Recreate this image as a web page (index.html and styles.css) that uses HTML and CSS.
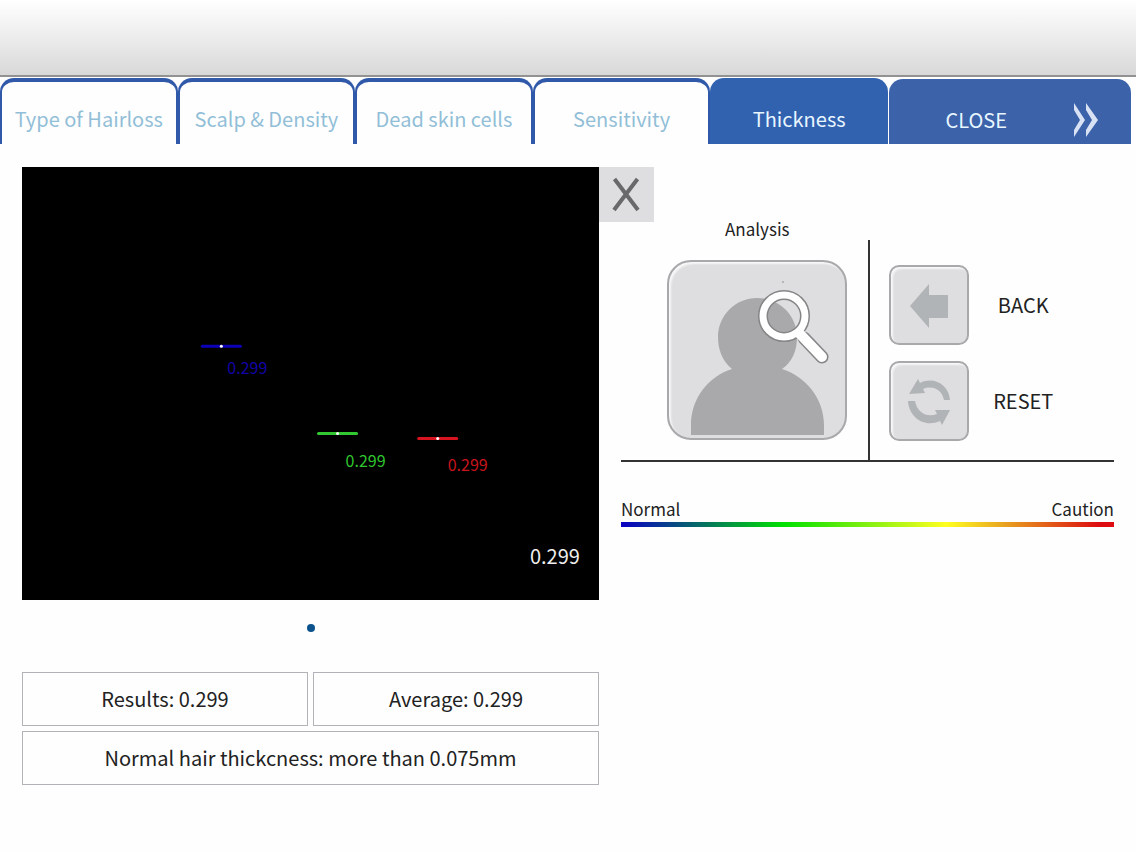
FILE: index.html
```html
<!DOCTYPE html>
<html lang="en">
<head>
  <meta charset="UTF-8" />
  <meta name="viewport" content="width=device-width, initial-scale=1.0"/>
  <title>Thickness</title>
  <link rel="stylesheet" href="styles.css">
</head>
<body>

<header class="topbar"></header>

<nav class="tabs">
  <button type="button" class="tab">Type of Hairloss</button>
  <button type="button" class="tab">Scalp &amp; Density</button>
  <button type="button" class="tab">Dead skin cells</button>
  <button type="button" class="tab">Sensitivity</button>
  <button type="button" class="tab active">Thickness</button>
  <button type="button" class="tab close">
    <span>CLOSE</span>
    <svg class="chevrons" viewBox="0 0 26 36" width="26" height="36">
      <path d="M1 1 L12 18 L1 35 V28 L7 18 L1 8 Z M13 1 L25 18 L13 35 V28 L19 18 L13 8 Z"/>
    </svg>
  </button>
</nav>

<main class="content">
  <section class="left">
    <div class="viewer">
      <svg class="scan" viewBox="0 0 576 432">
        <g class="blue">
          <path d="M180 179 H218"/>
          <circle cx="199" cy="179" r="1.5"/>
          <text x="205" y="207">0.299</text>
        </g>
        <g class="green">
          <path d="M296 266 H334"/>
          <circle cx="315" cy="266" r="1.5"/>
          <text x="323" y="299">0.299</text>
        </g>
        <g class="red">
          <path d="M396 271 H434"/>
          <circle cx="415" cy="271" r="1.5"/>
          <text x="425" y="303">0.299</text>
        </g>
        <text class="value" x="507" y="396">0.299</text>
      </svg>
      <button type="button" class="dismiss" aria-label="Close image">
        <svg viewBox="0 0 55 55"><path d="M15.500 12 L39 43 M38.500 12 L15 43"/></svg>
      </button>
    </div>
    <div class="pager"><span class="dot"></span></div>
    <div class="results">
      <div class="box">Results: 0.299</div>
      <div class="box">Average: 0.299</div>
      <div class="box wide">Normal hair thickcness: more than 0.075mm</div>
    </div>
  </section>

  <section class="right">
    <div class="tools">
      <div class="analysis">
        <label for="analysis">Analysis</label>
        <button type="button" id="analysis" class="tile large">
          <svg viewBox="0 0 180 180">
            <g class="person">
              <path d="M24 175 V165 C24 138 42 116 65 109 C55 101 51 89 51 77 C51 55 69 38 90 38 C112 38 130 55 130 77 C130 91 125 102 115 109 C138 116 157 138 157 165 V175 Z"/>
            </g>
            <circle cx="116" cy="22" r="1"/>
            <path class="outline" d="M137 78 L155 97"/>
            <circle class="outline ring" cx="117" cy="56" r="21"/>
            <path class="glass" d="M133 74 L155 97"/>
            <circle class="glass ring" cx="117" cy="56" r="21"/>
          </svg>
        </button>
      </div>
      <div class="actions">
        <button type="button" class="action">
          <span class="tile">
            <svg viewBox="0 0 80 80"><path d="M21 41 L40 19 V30 H59 V53 H40 V63 Z"/></svg>
          </span>
          <span>BACK</span>
        </button>
        <button type="button" class="action">
          <span class="tile">
            <svg viewBox="0 0 80 80">
              <path d="M20 33 L29 18 L31 22 C45 15 60 24 61 39 H55 C53 29 44 24 34 28 L36 32 Z"/>
              <path d="M61 49 L53 64 L51 60 C36 67 20 57 19 40 H26 C28 51 37 57 48 53 L46 49 Z"/>
            </svg>
          </span>
          <span>RESET</span>
        </button>
      </div>
    </div>
    <div class="scale">
      <div class="scale-labels"><span>Normal</span><span>Caution</span></div>
      <div class="scale-bar"></div>
    </div>
  </section>
</main>

</body>
</html>
```
FILE: styles.css
```css
* {
  box-sizing: border-box;
}
body {
  margin: 0;
  font-family: "Noto Sans CJK SC", sans-serif;
  font-size: 20px;
  line-height: 24px;
  background: #fefefe;
  color: #222;
}
button {
  padding: 0;
  border: none;
  background: none;
  font: inherit;
  color: inherit;
  cursor: pointer;
}
svg {
  display: block;
}

.topbar {
  height: 77px;
  margin-bottom: 1px;
  background: linear-gradient(#ffffff, #f2f2f2 35%, #d8d8d8);
  border-bottom: 2px solid #929292;
}

.tabs {
  display: grid;
  grid-template-columns: repeat(5, 1fr) 243px;
  padding-right: 5px;
}
.tab {
  height: 66px;
  padding-top: 12px;
  border: 2px solid #3159a9;
  border-top-width: 4px;
  border-bottom: none;
  border-radius: 14px 14px 0 0;
  color: #92bed8;
}
.tab.active {
  background: #3162b0;
  border-color: #3162b0;
  color: #e8f6ff;
}
.tab.close {
  display: flex;
  align-items: center;
  justify-content: flex-end;
  gap: 66px;
  margin: 1px 0 0 1px;
  height: 65px;
  padding-right: 30px;
  background: #3c62aa;
  border-color: #3c62aa;
  color: #e8f6ff;
}
.chevrons {
  fill: #d9e2f4;
}

.content {
  display: grid;
  grid-template-columns: 577fr 515fr;
  padding: 23px 22px;
}
.viewer {
  position: relative;
  background: #000;
}
.scan {
  width: 100%;
  stroke-width: 3;
  font-size: 16px;
}
.scan path {
  stroke-linecap: round;
}
.scan circle {
  fill: #fff;
}
.blue path {
  stroke: #0c00b8;
}
.blue text {
  fill: #1200a8;
}
.green path {
  stroke: #32c832;
}
.green text {
  fill: #2fc62f;
}
.red path {
  stroke: #d81420;
}
.red text {
  fill: #c8141c;
}
.scan .value {
  fill: #eee;
  font-size: 20px;
}
/* sits on the outer edge of the viewer */
.dismiss {
  position: absolute;
  top: 0;
  left: 100%;
  width: 55px;
  height: 55px;
  background: #dedde0;
}
.dismiss path {
  stroke: #69696b;
  stroke-width: 4;
}

.pager {
  display: flex;
  justify-content: center;
  padding: 24px 0 40px;
}
.dot {
  width: 8px;
  height: 8px;
  border-radius: 50%;
  background: #0c528c;
}
.results {
  display: grid;
  grid-template-columns: 1fr 1fr;
  gap: 5px;
}
.box {
  padding: 14px;
  border: 1px solid #b4b2b9;
  text-align: center;
}
.wide {
  grid-column: span 2;
}

.right {
  padding: 50px 0 0 22px;
}
.tools {
  display: grid;
  grid-template-columns: 1fr 1fr;
  border-bottom: 2px solid #333;
}
.analysis {
  display: flex;
  flex-direction: column;
  align-items: center;
  gap: 19px;
  padding: 0 20px 20px 46px;
}
.analysis label {
  font-size: 17px;
}
.tile {
  width: 80px;
  height: 80px;
  border: 2px solid #a9a8ab;
  border-radius: 10px;
  background: #dedde0;
  box-shadow: inset 2px 2px 2px #f8f8f8;
}
.tile svg {
  margin: -2px;
  fill: #b1b4b6;
}
.large {
  width: 180px;
  height: 180px;
  border-radius: 24px;
}
.large svg {
  fill: #a9a8ab;
}
.outline {
  fill: none;
  stroke: #858587;
  stroke-width: 13;
  stroke-linecap: round;
}
.glass {
  fill: none;
  stroke: #fff;
  stroke-width: 10;
  stroke-linecap: round;
}
.outline.ring {
  stroke-width: 10;
}
.glass.ring {
  stroke-width: 7;
}
.actions {
  display: flex;
  flex-direction: column;
  gap: 16px;
  margin-top: 23px;
  padding: 25px 36px 19px 19px;
  border-left: 2px solid #333;
}
.action {
  display: grid;
  grid-template-columns: 80px 1fr;
  align-items: center;
}

.scale {
  padding-top: 35px;
}
.scale-labels {
  display: flex;
  justify-content: space-between;
  font-size: 17px;
}
.scale-bar {
  height: 5px;
  margin-top: 1px;
  background: linear-gradient(to right, #0b00c4, #00e000 33%, #ffff20 66%, #e8a020 78%, #dc0c10 97%);
}
```
